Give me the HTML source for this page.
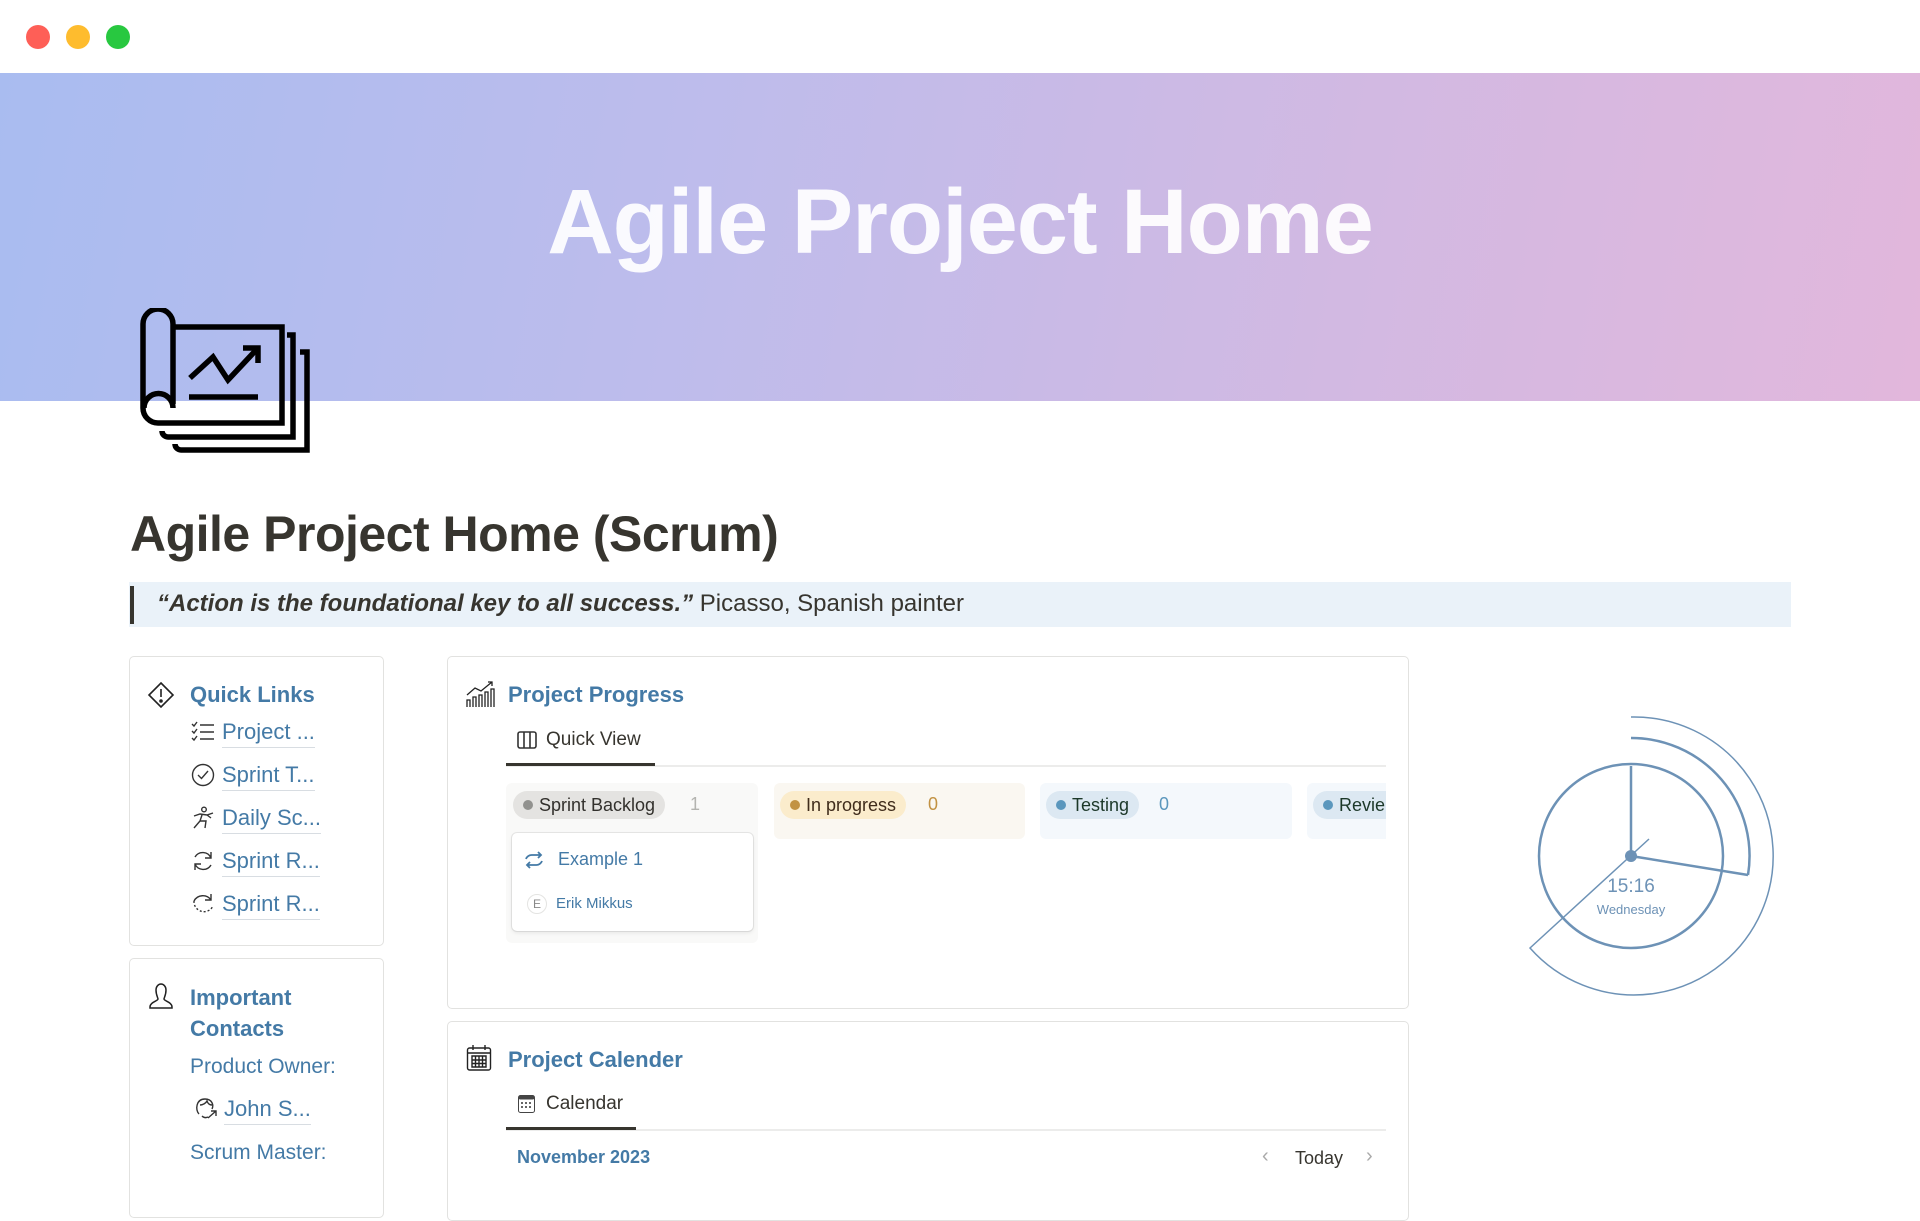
<!DOCTYPE html>
<html><head><meta charset="utf-8"><style>
*{margin:0;padding:0;box-sizing:border-box}
body{width:1920px;height:1200px;overflow:hidden;background:#fff;font-family:"Liberation Sans",sans-serif;position:relative;color:#37352f}
.a{position:absolute;white-space:nowrap}
.dot{position:absolute;width:24px;height:24px;border-radius:50%;top:25px}
.card{position:absolute;border:1px solid #e2e2e0;border-radius:5px;background:#fff}
.lnk{font-size:22px;color:#447aa6;border-bottom:1.5px solid #d8dde2;padding-bottom:2px}
.pill{position:absolute;height:28px;border-radius:14px;font-size:18px;line-height:28px;padding:0 10px 0 26px}
.pill:before{content:"";position:absolute;left:10px;top:9px;width:10px;height:10px;border-radius:50%;background:var(--d)}
</style></head><body>
<div class="dot" style="left:26px;background:#fe5f57"></div>
<div class="dot" style="left:66px;background:#febc2e"></div>
<div class="dot" style="left:106px;background:#28c840"></div>

<div class="a" style="left:0;top:73px;width:1920px;height:328px;background:linear-gradient(100deg,#a9bcf0 0%,#bdbcec 35%,#d2b9e2 70%,#e2b7dc 100%)"></div>
<div class="a" style="left:0;top:170px;width:1920px;text-align:center;font-size:92px;font-weight:bold;color:rgba(255,255,255,.93);letter-spacing:-1px">Agile Project Home</div>

<svg class="a" style="left:140px;top:308px" width="172" height="146" viewBox="0 0 172 146" fill="none" stroke="#000" stroke-width="5.5">
<path d="M33 96 V16 A15 15 0 0 0 3 16 V100 A15 15 0 0 0 18 115 H142 V19 H33"/>
<path d="M33 100 A14 14 0 0 0 4 100"/>
<path d="M147 27 H153 V129 H28 A6 6 0 0 1 22 123"/>
<path d="M160 44 H167 V142 H41 A6 6 0 0 1 35 136"/>
<path d="M50 70 L73 49 L88 72 L118 40"/>
<path d="M103 40 H118 V55"/>
<path d="M49 89 H118"/>
</svg>

<div class="a" style="left:130px;top:505px;font-size:50px;font-weight:bold;color:#37352f;letter-spacing:-.5px">Agile Project Home (Scrum)</div>

<div class="a" style="left:129px;top:582px;width:1662px;height:45px;background:#eaf2f9"></div>
<div class="a" style="left:130px;top:586px;width:4px;height:38px;background:#37352f"></div>
<div class="a" style="left:157px;top:590px;font-size:24px"><b><i>“Action is the foundational key to all success.”</i></b> Picasso, Spanish painter</div>

<!-- Quick links -->
<div class="card" style="left:129px;top:656px;width:255px;height:290px"></div>
<svg class="a" style="left:146px;top:680px" width="30" height="30" viewBox="0 0 30 30" fill="none" stroke="#222" stroke-width="1.6"><path d="M15 3 L27 15 L15 27 L3 15 Z"/><path d="M15 9 V17"/><circle cx="15" cy="21" r="1" fill="#222"/></svg>
<div class="a" style="left:190px;top:682px;font-size:22px;font-weight:bold;color:#447aa6">Quick Links</div>
<svg class="a" style="left:191px;top:720px" width="24" height="24" viewBox="0 0 24 24" fill="none" stroke="#333" stroke-width="1.4"><path d="M1 4 l2 2 l3-4 M1 11 l2 2 l3-4 M1 18 l2 2 l3-4 M9 5 H23 M9 12 H23 M9 19 H23"/></svg>
<div class="a lnk" style="left:222px;top:719px">Project ...</div>
<svg class="a" style="left:191px;top:763px" width="24" height="24" viewBox="0 0 24 24" fill="none" stroke="#333" stroke-width="1.4"><circle cx="12" cy="12" r="10.5"/><path d="M7 12 l3.5 3.5 L17 8"/></svg>
<div class="a lnk" style="left:222px;top:762px">Sprint T...</div>
<svg class="a" style="left:191px;top:806px" width="24" height="24" viewBox="0 0 24 24" fill="none" stroke="#333" stroke-width="1.4"><circle cx="13" cy="3.5" r="2.3"/><path d="M3 10 L9 8 L16 9 L22 7 M11 9 L9 15 L3 22 M9 15 L15 15 L14 22 M16 9 L20 12"/></svg>
<div class="a lnk" style="left:222px;top:805px">Daily Sc...</div>
<svg class="a" style="left:191px;top:849px" width="24" height="24" viewBox="0 0 24 24" fill="none" stroke="#333" stroke-width="1.4"><path d="M20 9 A9 9 0 0 0 4 8 M4 15 A9 9 0 0 0 20 16 M20 3 V9 H14 M4 21 V15 H10"/></svg>
<div class="a lnk" style="left:222px;top:848px">Sprint R...</div>
<svg class="a" style="left:191px;top:892px" width="24" height="24" viewBox="0 0 24 24" fill="none" stroke="#333" stroke-width="1.4"><path d="M20 8 A10 10 0 0 0 3 9"/><path d="M3 9 A10 10 0 0 0 22 14" stroke-dasharray="2 2"/><path d="M20 2 V8 H14"/></svg>
<div class="a lnk" style="left:222px;top:891px">Sprint R...</div>

<!-- Contacts -->
<div class="card" style="left:129px;top:958px;width:255px;height:260px"></div>
<svg class="a" style="left:148px;top:982px" width="26" height="28" viewBox="0 0 26 28" fill="none" stroke="#222" stroke-width="1.5"><path d="M8 8 A5 6 0 0 1 18 8 C18 13 16 16 16 17 C16 19 24 20 24 25 V26 H2 V25 C2 20 10 19 10 17 C10 16 8 13 8 8 Z"/></svg>
<div class="a" style="left:190px;top:982px;font-size:22px;font-weight:bold;color:#447aa6;line-height:31px;white-space:normal">Important<br>Contacts</div>
<div class="a" style="left:190px;top:1055px;font-size:21px;color:#447aa6">Product Owner:</div>
<svg class="a" style="left:194px;top:1096px" width="24" height="26" viewBox="0 0 24 26" fill="none" stroke="#333" stroke-width="1.4"><path d="M5 18 C1 14 2 3 11 3 C18 3 20 9 18 13 M6 9 C9 9 12 7 13 5 C14 8 16 9 18 9 M8 20 C10 22 12 22 14 21 M14 22 L22 15 M17 15 H22 V20"/></svg>
<div class="a lnk" style="left:224px;top:1096px">John S...</div>
<div class="a" style="left:190px;top:1141px;font-size:21px;color:#447aa6">Scrum Master:</div>

<!-- Project progress -->
<div class="card" style="left:447px;top:656px;width:962px;height:353px"></div>
<svg class="a" style="left:465px;top:680px" width="30" height="30" viewBox="0 0 30 30" fill="none" stroke="#222" stroke-width="1.3"><path d="M2 27 V20 H5 V27 M8 27 V17 H11 V27 M14 27 V15 H17 V27 M20 27 V12 H23 V27 M26 27 V9 H29 V27 M2 15 L10 8 L16 11 L27 2 M23 2 H27 V6"/></svg>
<div class="a" style="left:508px;top:682px;font-size:22px;font-weight:bold;color:#447aa6">Project Progress</div>
<svg class="a" style="left:517px;top:731px" width="20" height="18" viewBox="0 0 20 18" fill="none" stroke="#333" stroke-width="1.6"><rect x="1" y="1" width="18" height="16" rx="2"/><path d="M7 1 V17 M13 1 V17"/></svg>
<div class="a" style="left:546px;top:729px;font-size:19px;color:#37352f">Quick View</div>
<div class="a" style="left:506px;top:765px;width:880px;height:2px;background:#ececeb"></div>
<div class="a" style="left:506px;top:763px;width:149px;height:3px;background:#37352f"></div>

<div class="a" style="left:506px;top:783px;width:252px;height:160px;background:#f9f9f8;border-radius:6px"></div>
<div class="a" style="left:774px;top:783px;width:251px;height:56px;background:#faf7f1;border-radius:6px"></div>
<div class="a" style="left:1040px;top:783px;width:252px;height:56px;background:#f4f8fc;border-radius:6px"></div>
<div class="a" style="left:1307px;top:783px;width:79px;height:56px;background:#f4f8fc;border-radius:6px 0 0 6px"></div>

<div class="pill" style="left:513px;top:791px;background:#e4e3e1;color:#32302c;--d:#91918e">Sprint Backlog</div>
<div class="a" style="left:690px;top:794px;font-size:18px;color:#b4b4b0">1</div>
<div class="pill" style="left:780px;top:791px;background:#fbeccc;color:#402c1b;--d:#c29243">In progress</div>
<div class="a" style="left:928px;top:794px;font-size:18px;color:#c29243">0</div>
<div class="pill" style="left:1046px;top:791px;background:#dce8f2;color:#1c3829;--d:#5b97bd">Testing</div>
<div class="a" style="left:1159px;top:794px;font-size:18px;color:#5b97bd">0</div>
<div class="pill" style="left:1313px;top:791px;width:73px;border-radius:14px 0 0 14px;background:#dce8f2;color:#1c3829;--d:#5b97bd;overflow:hidden">Revie</div>

<div class="a" style="left:512px;top:833px;width:241px;height:98px;background:#fff;border-radius:5px;box-shadow:0 0 0 1px rgba(15,15,15,.08),0 2px 4px rgba(15,15,15,.08)"></div>
<svg class="a" style="left:524px;top:850px" width="20" height="20" viewBox="0 0 20 20" fill="none" stroke="#447aa6" stroke-width="1.8"><path d="M2 9 A6 6 0 0 1 8 5 H17 M14 2 L17 5 L14 8 M18 11 A6 6 0 0 1 12 15 H3 M6 12 L3 15 L6 18"/></svg>
<div class="a" style="left:558px;top:849px;font-size:18px;color:#447aa6">Example 1</div>
<div class="a" style="left:527px;top:894px;width:20px;height:20px;border-radius:50%;border:1px solid #e4e4e2;font-size:12px;line-height:18px;text-align:center;color:#888">E</div>
<div class="a" style="left:556px;top:895px;font-size:15px;color:#447aa6">Erik Mikkus</div>

<!-- Calendar -->
<div class="card" style="left:447px;top:1021px;width:962px;height:200px"></div>
<svg class="a" style="left:466px;top:1044px" width="26" height="28" viewBox="0 0 26 28" fill="none" stroke="#222" stroke-width="1.4"><rect x="1.5" y="4" width="23" height="22" rx="2"/><path d="M1.5 9 H24.5 M7 1 V6 M19 1 V6 M6 12 H20 V23 H6 Z M6 16 H20 M6 19.5 H20 M9.5 12 V23 M13 12 V23 M16.5 12 V23"/></svg>
<div class="a" style="left:508px;top:1047px;font-size:22px;font-weight:bold;color:#447aa6">Project Calender</div>
<svg class="a" style="left:518px;top:1095px" width="17" height="18" viewBox="0 0 17 18"><rect x="0.5" y="0.5" width="16" height="17" rx="2" fill="#fff" stroke="#444"/><rect x="0.5" y="0.5" width="16" height="4" rx="2" fill="#444"/><g fill="#666"><rect x="3" y="7" width="2" height="2"/><rect x="7" y="7" width="2" height="2"/><rect x="11" y="7" width="2" height="2"/><rect x="3" y="11" width="2" height="2"/><rect x="7" y="11" width="2" height="2"/><rect x="11" y="11" width="2" height="2"/></g></svg>
<div class="a" style="left:546px;top:1093px;font-size:19px;color:#37352f">Calendar</div>
<div class="a" style="left:506px;top:1129px;width:880px;height:2px;background:#ececeb"></div>
<div class="a" style="left:506px;top:1127px;width:130px;height:3px;background:#37352f"></div>
<div class="a" style="left:517px;top:1147px;font-size:18px;font-weight:bold;color:#447aa6">November 2023</div>
<div class="a" style="left:1262px;top:1145px;font-size:20px;color:#aaa">‹</div>
<div class="a" style="left:1295px;top:1148px;font-size:18px;color:#37352f">Today</div>
<div class="a" style="left:1366px;top:1145px;font-size:20px;color:#aaa">›</div>

<!-- Clock -->
<svg class="a" style="left:1480px;top:700px" width="320" height="320" viewBox="1480 700 320 320" fill="none" stroke="#6d92b6">
<circle cx="1631" cy="856" r="92" stroke-width="2.5"/>
<path d="M1631 738 A118 118 0 0 1 1748 875" stroke-width="2.5"/>
<path d="M1631 766 V856 L1748 875" stroke-width="2.5"/>
<path d="M1631 717 A139 139 0 1 1 1530 948 L1649 839" stroke-width="1.5"/>
<circle cx="1631" cy="856" r="6" fill="#6d92b6" stroke="none"/>
<text x="1631" y="892" text-anchor="middle" font-family="Liberation Sans" font-size="19" fill="#6d92b6" stroke="none">15:16</text>
<text x="1631" y="914" text-anchor="middle" font-family="Liberation Sans" font-size="13" fill="#6d92b6" stroke="none">Wednesday</text>
</svg>
</body></html>
